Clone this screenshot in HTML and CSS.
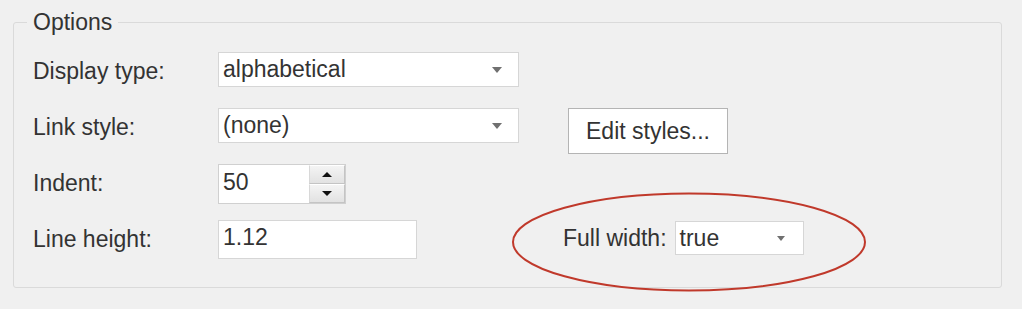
FILE: index.html
```html
<!DOCTYPE html>
<html lang="en">
<head>
  <meta charset="UTF-8">
  <title>Options</title>
  <link rel="stylesheet" href="styles.css">
</head>
<body>
  <div class="page">
    <div class="options">
      <div class="legend">Options</div>
      <div class="form-grid">
        <!-- row 1 -->
        <div class="label">Display type:</div>
        <div class="select wide"><span>alphabetical</span><i class="caret"></i></div>
        <div></div>

        <!-- row 2 -->
        <div class="label">Link style:</div>
        <div class="select wide"><span>(none)</span><i class="caret"></i></div>
        <div><button class="edit-button">Edit styles...</button></div>

        <!-- row 3 -->
        <div class="label">Indent:</div>
        <div class="spinner">
          <span class="spinner-value">50</span>
          <span class="spinner-buttons">
            <span class="spin-btn"><i class="arrow-up"></i></span>
            <span class="spin-btn"><i class="arrow-down"></i></span>
          </span>
        </div>
        <div></div>

        <!-- row 4 -->
        <div class="label">Line height:</div>
        <div class="text-input">1.12</div>
        <div class="full-width">
          <span class="label">Full width:</span>
          <div class="select small"><span>true</span><i class="caret"></i></div>
          <svg class="highlight" width="356" height="102" viewBox="0 0 356 102">
            <ellipse cx="178" cy="50" rx="176" ry="48.5" fill="none" stroke="#c0392b" stroke-width="2"/>
          </svg>
        </div>
      </div>
    </div>
  </div>
</body>
</html>
```

FILE: styles.css
```css
/* 选项面板 */
body {
  margin: 0;
  min-height: 100vh;
  background-color: #f0f0f0;
  font-family: "Liberation Sans", Arial, sans-serif;
  font-size: 23px;
  color: #333333;
}
.page {
  padding: 22px 20px 20px 13px;
}
.options {
  padding: 0 0 11px 19px;
  border: 1px solid #dadada;
  border-radius: 3px;
}
.legend {
  width: fit-content;
  margin: -14px 0 0 -6px;
  padding: 0 6px;
  line-height: 26px;
  background-color: #f0f0f0;
}
.form-grid {
  display: grid;
  grid-template-columns: 185px 345px auto;
  grid-auto-rows: 56px;
  align-items: start;
  margin-top: 17px;
}
.label {
  line-height: 40px;
  margin-top: -1px;
  white-space: nowrap;
}
.select {
  display: flex;
  align-items: center;
  justify-content: space-between;
  height: 35px;
  box-sizing: border-box;
  background-color: #ffffff;
  border: 1px solid #d6d6d6;
  padding: 0 16px 0 4px;
  line-height: 33px;
}
.select.wide {
  width: 301px;
}
.select.small {
  width: 129px;
  height: 34px;
  padding-right: 18px;
}
.caret {
  width: 0;
  height: 0;
  border-left: 5px solid transparent;
  border-right: 5px solid transparent;
  border-top: 6px solid #707070;
  margin-top: 1px;
}
.select.small .caret {
  border-left-width: 4.5px;
  border-right-width: 4.5px;
  border-top-width: 5px;
}
/* 数字输入框 */
.spinner {
  display: flex;
  width: 128px;
  height: 40px;
  box-sizing: border-box;
  border: 1px solid #d0d0d0;
  background-color: #ffffff;
}
.spinner-value {
  flex: 1;
  padding: 0 4px;
  line-height: 34px;
}
.spinner-buttons {
  display: flex;
  flex-direction: column;
  width: 36px;
}
.spin-btn {
  flex: 1;
  display: flex;
  align-items: center;
  justify-content: center;
  background: linear-gradient(#f4f4f4, #e2e2e2);
  border: 1px solid #c4c4c4;
  border-top-color: #ffffff;
  border-left-color: #d8d8d8;
}
.arrow-up, .arrow-down {
  width: 0;
  height: 0;
  border-left: 5px solid transparent;
  border-right: 5px solid transparent;
}
.arrow-up {
  border-bottom: 5px solid #111111;
}
.arrow-down {
  border-top: 5px solid #111111;
}
.text-input {
  width: 199px;
  height: 39px;
  box-sizing: border-box;
  background-color: #ffffff;
  border: 1px solid #d6d6d6;
  padding: 0 4px;
  line-height: 33px;
}
.edit-button {
  width: 160px;
  height: 46px;
  margin-left: 5px;
  padding: 0;
  font-family: inherit;
  font-size: 23px;
  color: #333333;
  background-color: #ffffff;
  border: 1px solid #b4b4b4;
  border-radius: 0;
}
/* 高亮圈 */
.full-width {
  position: relative;
  display: flex;
  align-items: flex-start;
  gap: 8px;
  margin-top: 1px;
}
.full-width .label {
  line-height: 36px;
}
.highlight {
  position: absolute;
  left: -52px;
  top: -29px;
  pointer-events: none;
}
```
